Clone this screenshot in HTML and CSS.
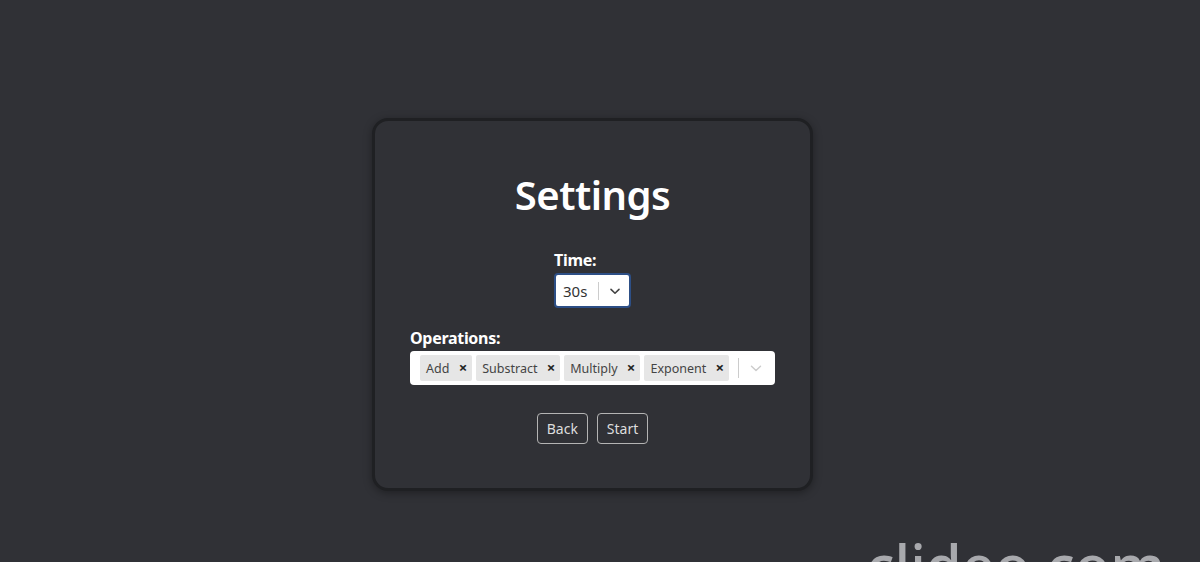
FILE: index.html
```html
<!DOCTYPE html>
<html>
  <head>
    <title>Settings</title>
    <link rel="stylesheet" href="styles.css">
  </head>
  <body>
    <div class="page">
      <div class="card">
        <h1 class="title">Settings</h1>

        <div class="field field-time">
          <label class="label">Time:</label>
          <div class="select select-time">
            <span class="value">30s</span>
            <span class="sep"></span>
            <svg class="chevron" width="16" height="16" viewBox="0 0 20 20"><path d="M5 8l5 4.8 5-4.8" fill="none" stroke="#444" stroke-width="2" stroke-linecap="round" stroke-linejoin="round"/></svg>
          </div>
        </div>

        <div class="field field-ops">
          <label class="label">Operations:</label>
          <div class="select select-multi">
            <div class="chips">
              <span class="chip">Add <b class="x">&times;</b></span>
              <span class="chip">Substract <b class="x">&times;</b></span>
              <span class="chip">Multiply <b class="x">&times;</b></span>
              <span class="chip">Exponent <b class="x">&times;</b></span>
            </div>
            <span class="sep sep-light"></span>
            <svg class="chevron" width="18" height="18" viewBox="0 0 20 20"><path d="M5 8l5 4.8 5-4.8" fill="none" stroke="#ccc" stroke-width="1.6" stroke-linecap="round" stroke-linejoin="round"/></svg>
          </div>
        </div>

        <div class="buttons">
          <button class="btn">Back</button>
          <button class="btn">Start</button>
        </div>
      </div>
    </div>
    <div class="watermark">clideo.com</div>
  </body>
</html>
```
FILE: styles.css
```css
html, body {
    margin: 0;
    height: 100%;
    overflow: hidden;
}

body {
    background: #303136;
    font-family: "Noto Sans", "Open Sans", sans-serif;
    color: #fff;
}

.page {
    display: flex;
    justify-content: center;
    padding-top: 118px;
    padding-right: 15px;
}

.card {
    box-sizing: border-box;
    width: 441px;
    height: 373px;
    border: 3px solid #1f2023;
    border-radius: 16px;
    box-shadow: 0 2px 8px rgba(0, 0, 0, 0.35);
    background: #303136;
    display: flex;
    flex-direction: column;
    align-items: center;
}

.title {
    margin: 48px 0 0 0;
    font-size: 40px;
    font-weight: 600;
    line-height: 52px;
    letter-spacing: -0.5px;
}

.field {
    display: flex;
    flex-direction: column;
}

.field-time {
    margin-top: 29px;
    align-items: flex-start;
}

.label {
    font-size: 16px;
    font-weight: 700;
    line-height: 20px;
    letter-spacing: -0.3px;
}

.select {
    box-sizing: border-box;
    background: #fff;
    border-radius: 4px;
    display: flex;
    align-items: center;
    color: #333;
}

.select-time {
    width: 77px;
    height: 35px;
    border: 2px solid #2d4f86;
    padding-left: 7px;
    margin-top: 3px;
}

.select-time .value {
    font-size: 15px;
    width: 35px;
}

.sep {
    width: 1px;
    height: 18px;
    background: #ccc;
}

.select-time .chevron {
    margin-left: 8px;
}

.field-ops {
    margin-top: 20px;
    width: 365px;
}

.select-multi {
    height: 34px;
    margin-top: 3px;
    padding: 0 10px 0 10px;
}

.chips {
    display: flex;
    gap: 4px;
    flex: 1;
}

.chip {
    background: #e6e6e6;
    border-radius: 2px;
    font-size: 12.5px;
    line-height: 24px;
    padding: 0 5px 0 6px;
    color: #444;
}

.chip .x {
    font-size: 15px;
    color: #222;
    margin-left: 6px;
}

.sep-light {
    height: 20px;
}

.select-multi .chevron {
    margin-left: 8px;
}

.buttons {
    display: flex;
    gap: 9px;
    margin-top: 28px;
}

.btn {
    height: 31px;
    padding: 0 9px;
    border: 1px solid #b4b4b4;
    border-radius: 4px;
    background: transparent;
    color: #ddd;
    font-family: "Noto Sans", "Open Sans", sans-serif;
    font-size: 14px;
}

.watermark {
    position: absolute;
    left: 866px;
    top: 530px;
    font-size: 58px;
    font-weight: 500;
    color: #a8a9ad;
    line-height: 70px;
}
```
